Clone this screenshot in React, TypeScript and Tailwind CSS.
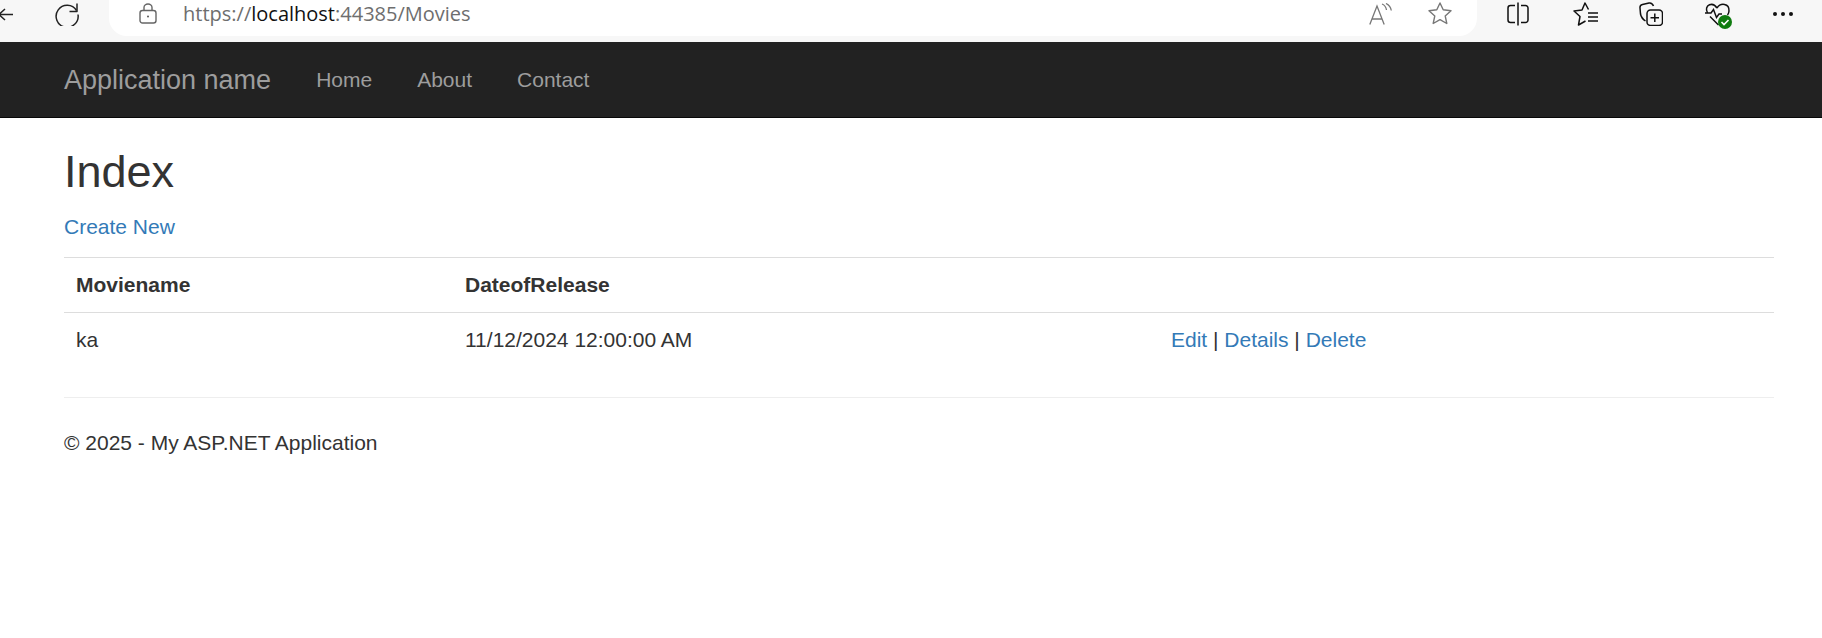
import React from "react";

const sans = "font-['Liberation_Sans',Arial,sans-serif]";

function BrowserBar() {
  return (
    <div className="flex h-[42px] items-start overflow-hidden bg-[#f7f7f7]">
      <div className="flex h-[36px] w-[109px] shrink-0 items-center pb-[9px]">
        {/* back arrow is cut off by the crop */}
        <svg width="14" height="24" viewBox="0 0 14 24" fill="none" stroke="#222" strokeWidth="1.5" className="shrink-0">
          <path d="M0 12.500h13M5 7l-6 5.500 6 5.500" />
        </svg>
        <svg width="24" height="24" viewBox="0 0 24 24" fill="none" stroke="#222" strokeWidth="1.500" className="ml-[41px] shrink-0">
          <path d="M22 1.500v8h-7.500" strokeLinejoin="round" />
          <path d="M21.500 8.500A11 11 0 1 0 23 12.500" />
        </svg>
      </div>
      <div className="flex h-[36px] w-[1368px] shrink-0 items-center rounded-b-[18px] bg-white pb-[9px] pl-[30px]">
        <svg width="18" height="21" viewBox="0 0 18 21" fill="none" stroke="#666" strokeWidth="1.400" className="shrink-0">
          <rect x="1" y="7.500" width="16" height="12.500" rx="2.500" />
          <path d="M5 7.500V4.500a4 3.500 0 0 1 8 0v3" />
          <circle cx="9" cy="13.500" r="1" fill="#555" stroke="none" />
        </svg>
        <div className="ml-[26px] font-['Open_Sans',sans-serif] text-[20px] leading-none text-[#6e6e6e]">
          https://<span className="text-[#111]">localhost</span>:44385/Movies
        </div>
        <div className="ml-auto flex items-center gap-[36px] pr-[25px]">
          <svg width="23" height="22" viewBox="0 0 23 22" fill="none" stroke="#777" strokeWidth="1.300">
            <path d="M0.800 21.500L8 3l7.200 18.500M3 16h10" />
            <path d="M13 1c2.500 1 4 3 4.500 6M17 .500c3 1.500 4.800 4 5.300 7" />
          </svg>
          <svg width="24" height="23" viewBox="0 0 24 23" fill="none" stroke="#777" strokeWidth="1.400" strokeLinejoin="round">
            <path d="M12 1l3.200 6.800 7.800.9-5.800 5.200 1.600 7.600-6.800-3.900-6.800 3.900 1.600-7.600L1 8.700l7.800-.9z" />
          </svg>
        </div>
      </div>
      <div className="flex h-[36px] flex-1 items-center pb-[9px]">
        <svg width="22" height="24" viewBox="0 0 22 24" fill="none" stroke="#111" strokeWidth="1.500" className="ml-[30px] shrink-0">
          <path d="M8 3.500H3.500a2.500 2.500 0 0 0-2.500 2.500v12a2.500 2.500 0 0 0 2.500 2.500H8M11 .500v23M14 3.500h4.500a2.500 2.500 0 0 1 2.500 2.500v12a2.500 2.500 0 0 1-2.500 2.500H14" />
        </svg>
        <svg width="25" height="24" viewBox="0 0 25 24" fill="none" stroke="#111" strokeWidth="1.500" strokeLinejoin="round" className="ml-[44px] shrink-0">
          <path d="M15.500 7.500L12 1 9 8 1 9l6 5.500L5.500 23l7-4" />
          <path d="M15 11h10M15 15h10M15 19h10" />
        </svg>
        <svg width="24" height="24" viewBox="0 0 24 24" fill="none" stroke="#111" strokeWidth="1.500" className="ml-[41px] shrink-0">
          <path d="M6.500 19C3.500 17 2 14.500 1.500 12L1 6c-.2-1.800.8-3 2.500-3.400L10 1c2-.4 3.500.5 4.500 3" />
          <rect x="8" y="8" width="15.500" height="15.500" rx="3.500" />
          <path d="M15.800 11.500v8.500M11.500 15.800H20" />
        </svg>
        <div className="relative ml-[42px] h-[24px] w-[27px] shrink-0">
          <svg width="27" height="24" viewBox="0 0 27 24" fill="none" stroke="#111" strokeWidth="1.500">
            <path d="M12 6c2-3 5-4 7.500-3.500 3 .6 4.700 3 4.500 6.500-.1 1.500-.6 2.800-1.500 4M2.500 11C.5 7.500 1.500 4 4.500 2.800 7 1.800 10 3 12 6M5 14.500L13.500 23" />
            <path d="M0 11h6l2.500-3.500 3 8 2.500-3.500h3" />
          </svg>
          <div className="absolute bottom-[-3px] right-[0px] flex h-[14px] w-[14px] items-center justify-center rounded-full bg-[#107c10]">
            <svg width="10" height="10" viewBox="0 0 10 10" fill="none" stroke="#fff" strokeWidth="1.600">
              <path d="M1.500 5l2.500 2.500L8.500 3" />
            </svg>
          </div>
        </div>
        <div className="ml-[41px] flex gap-[4px]">
          <span className="h-[4px] w-[4px] rounded-full bg-[#111]" />
          <span className="h-[4px] w-[4px] rounded-full bg-[#111]" />
          <span className="h-[4px] w-[4px] rounded-full bg-[#111]" />
        </div>
      </div>
    </div>
  );
}

function NavBar() {
  return (
    <nav className="flex h-[76px] items-center border-b border-[#080808] bg-[#222222] pl-[64px] text-[#9d9d9d]">
      <a className="text-[27px] leading-[30px]">Application name</a>
      <ul className="ml-[45px] flex gap-[45px] text-[21px] leading-[30px]">
        <li>Home</li>
        <li>About</li>
        <li>Contact</li>
      </ul>
    </nav>
  );
}

function MoviesTable() {
  return (
    <table className="w-full table-fixed border-collapse">
      <thead>
        <tr className="border-y-[1.500px] border-[#dddddd] text-left">
          <th className="w-[389px] p-[12px] font-bold">Moviename</th>
          <th className="w-[706px] p-[12px] font-bold">DateofRelease</th>
          <th className="p-[12px]"></th>
        </tr>
      </thead>
      <tbody>
        <tr>
          <td className="p-[12px]">ka</td>
          <td className="p-[12px]">11/12/2024 12:00:00 AM</td>
          <td className="p-[12px]">
            <a className="text-[#337ab7]">Edit</a> | <a className="text-[#337ab7]">Details</a> |{" "}
            <a className="text-[#337ab7]">Delete</a>
          </td>
        </tr>
      </tbody>
    </table>
  );
}

export default function App() {
  return (
    <div className={`h-[638px] overflow-hidden bg-white ${sans} text-[21px] leading-[30px] text-[#333333]`}>
      <BrowserBar />
      <NavBar />
      <main className="mx-[64px] mt-[29px] w-[1710px]">
        <h2 className="mb-[15px] text-[45px] leading-[50px]">Index</h2>
        <p className="mb-[15px]">
          <a className="text-[#337ab7]">Create New</a>
        </p>
        <MoviesTable />
        <hr className="mt-[30px] border-t-[1.500px] border-[#eeeeee]" />
        <footer className="mt-[30px]">
          <p>© 2025 - My ASP.NET Application</p>
        </footer>
      </main>
    </div>
  );
}
